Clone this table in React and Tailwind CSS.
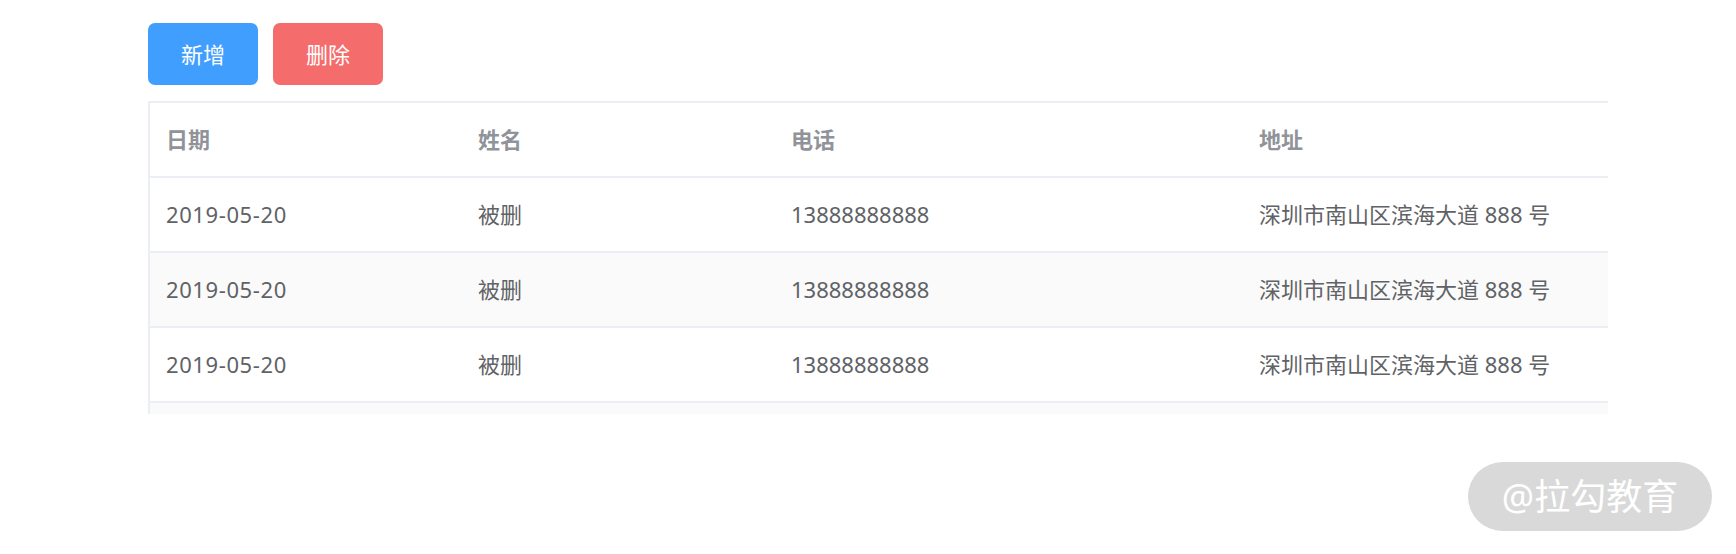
import React from "react";

const rows = [0, 1, 2];

function Cell({ w, children, className = "" }) {
  return (
    <div className={`flex h-full shrink-0 items-center pl-[16px] ${w} ${className}`}>{children}</div>
  );
}

export default function App() {
  return (
    <div
      className="relative h-[554px] w-[1736px] overflow-hidden bg-white"
      style={{ fontFamily: '"Noto Sans", "Noto Sans CJK SC", sans-serif' }}
    >
      <div className="pl-[148px] pt-[23px]">
        <div className="flex gap-[15px]">
          <button className="flex h-[62px] w-[110px] items-center justify-center rounded-[7px] bg-[#409eff] text-[22px] text-white">
            新增
          </button>
          <button className="flex h-[62px] w-[110px] items-center justify-center rounded-[7px] bg-[#f56c6c] text-[22px] text-white">
            删除
          </button>
        </div>
        <div className="mt-[16px] h-[313px] w-[1460px] overflow-hidden border-l-2 border-t-2 border-[#ebeef5]">
          <div className="flex h-[75px] border-b-2 border-[#ebeef5] text-[22px] font-bold text-[#909399]">
            <Cell w="w-[312px]">日期</Cell>
            <Cell w="w-[313px]">姓名</Cell>
            <Cell w="w-[468px]">电话</Cell>
            <Cell w="w-[365px]">地址</Cell>
          </div>
          {rows.map((i) => (
            <div
              key={i}
              className={`flex h-[75px] border-b-2 border-[#ebeef5] text-[22px] text-[#606266] ${
                i % 2 === 1 ? "bg-[#fafafa]" : "bg-white"
              }`}
            >
              <Cell w="w-[312px]" className="tracking-[0.6px]">2019-05-20</Cell>
              <Cell w="w-[313px]">被删</Cell>
              <Cell w="w-[468px]">13888888888</Cell>
              <Cell w="w-[365px]">深圳市南山区滨海大道 888 号</Cell>
            </div>
          ))}
          <div className="h-[75px] bg-[#fafafa]" />
        </div>
      </div>
      <div className="absolute left-[1468px] top-[462px] flex h-[69px] w-[244px] items-center justify-center rounded-full bg-[#d9d9d9] text-[36px] text-white">
        @拉勾教育
      </div>
    </div>
  );
}
